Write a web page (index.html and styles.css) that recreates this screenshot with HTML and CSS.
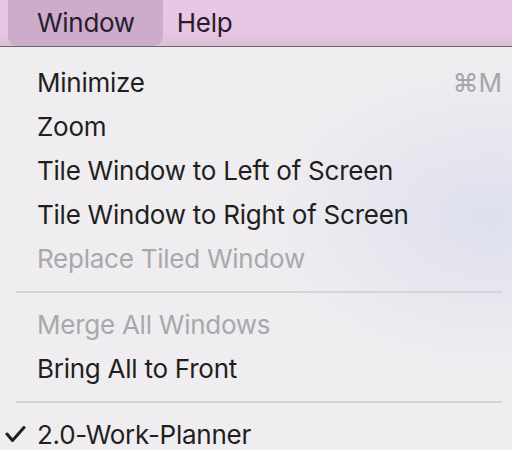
FILE: index.html
```html
<!DOCTYPE html>
<html lang="en">
<head>
<meta charset="utf-8">
<title>Window menu</title>
<link rel="stylesheet" href="styles.css">
</head>
<body>
<div class="screen">
  <nav class="menubar">
    <div class="bar-item active">Window</div>
    <div class="bar-item">Help</div>
  </nav>
  <div class="menu">
    <div class="row"><span class="label">Minimize</span><span class="shortcut">⌘M</span></div>
    <div class="row"><span class="label">Zoom</span></div>
    <div class="row"><span class="label">Tile Window to Left of Screen</span></div>
    <div class="row"><span class="label">Tile Window to Right of Screen</span></div>
    <div class="row disabled"><span class="label">Replace Tiled Window</span></div>
    <div class="sep"></div>
    <div class="row disabled"><span class="label">Merge All Windows</span></div>
    <div class="row"><span class="label">Bring All to Front</span></div>
    <div class="sep"></div>
    <div class="row checked">
      <svg class="check" viewBox="0 0 22 17" width="22" height="17"><path d="M2 8 L7.5 14.5 L19 1.5" fill="none" stroke="#1e1e1e" stroke-width="3" stroke-linecap="round" stroke-linejoin="round"/></svg>
      <span class="label">2.0-Work-Planner</span>
    </div>
  </div>
</div>
</body>
</html>
```

FILE: styles.css
```css
html, body {
  margin: 0;
  padding: 0;
}
body {
  width: 512px;
  height: 450px;
  overflow: hidden;
  font-family: "Inter", "Liberation Sans", sans-serif;
  color: #1f1f21;
}
.screen {
  display: flex;
  flex-direction: column;
  height: 450px;
}
.menubar {
  height: 48px;
  border-bottom: 1px solid #6f6470;
  background: linear-gradient(to bottom, #e9c6e6 0%, #e7c6e3 70%, #dbbfd8 100%);
  display: flex;
  align-items: stretch;
  padding-left: 8px;
  gap: 14px;
}
.bar-item {
  font-size: 26px;
  letter-spacing: -0.3px;
  line-height: 46px;
  height: 46px;
  color: #2a1c2c;
}
.bar-item.active {
  background: #ccabcb;
  border-radius: 0 0 9px 9px;
  padding: 0 28px 0 29px;
}
.menu {
  flex: 1;
  padding-top: 14px;
  background:
    radial-gradient(ellipse 220px 150px at 490px 170px, rgba(214,218,236,0.7), rgba(226,226,240,0) 100%),
    #efedf0;
}
.row {
  position: relative;
  display: flex;
  justify-content: space-between;
  height: 44px;
  line-height: 44px;
  font-size: 26px;
  letter-spacing: -0.25px;
  padding: 0 10px 0 37px;
  white-space: nowrap;
}
.row.disabled {
  color: #a9a8ac;
}
.shortcut {
  color: #a6a5a9;
  letter-spacing: 0;
}
.sep {
  height: 22px;
  position: relative;
}
.sep::after {
  content: "";
  position: absolute;
  left: 16px;
  right: 10px;
  top: 10px;
  height: 2px;
  background: #d6d4d8;
}
.check {
  position: absolute;
  left: 5px;
  top: 13px;
}
```
